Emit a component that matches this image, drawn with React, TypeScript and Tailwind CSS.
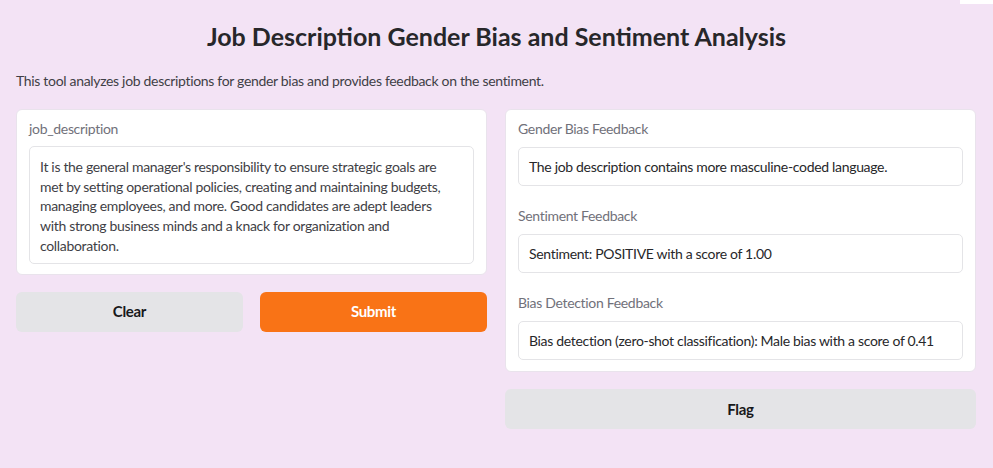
import React from 'react';

const FONT = { fontFamily: 'Lato, "Noto Sans", sans-serif' };

const JOB_LINES = [
  "It is the general manager's responsibility to ensure strategic goals are",
  'met by setting operational policies, creating and maintaining budgets,',
  'managing employees, and more. Good candidates are adept leaders',
  'with strong business minds and a knack for organization and',
  'collaboration.',
];

function OutputField({ label, value }: { label: string; value: string }) {
  return (
    <div className="flex flex-col">
      <div className="text-[14px] leading-[20px] text-[#71717a] h-[20px] mb-[8px]">{label}</div>
      <div className="h-[39px] border border-[#e4e4e7] rounded-[5px] px-[10px] flex items-center text-[14px] text-[#27272a] whitespace-nowrap">
        {value}
      </div>
    </div>
  );
}

export default function App() {
  return (
    <div className="relative w-[993px] h-[468px] bg-[#f3e3f5] text-[#27272a] overflow-hidden tracking-[-0.02em]" style={FONT}>
      {/* stray white corner at top right */}
      <div className="absolute top-0 right-0 w-[33px] h-[4px] bg-white" />

      <div className="px-[16px] pt-[20px]">
        <h1 className="text-center text-[25px] leading-[32px] font-bold tracking-normal text-[#27272a]">
          Job Description Gender Bias and Sentiment Analysis
        </h1>
        <p className="mt-[19px] text-[14px] leading-[20px] text-[#3f3f46]">
          This tool analyzes job descriptions for gender bias and provides feedback on the sentiment.
        </p>

        <div className="mt-[18px] flex gap-[18px] items-start">
          {/* left column */}
          <div className="w-[471px] flex flex-col gap-[17px]">
            <div className="bg-white border border-[#e9e3ec] rounded-[6px] px-[12px] pt-[9px] pb-[10px]">
              <div className="text-[14px] leading-[20px] h-[20px] text-[#71717a] mb-[7px]">job_description</div>
              <div className="border border-[#e4e4e7] rounded-[5px] px-[10px] pt-[10px] pb-[7px] text-[14px] leading-[19.7px] text-[#3f3f46]">
                {JOB_LINES.map((l) => (
                  <div key={l} className="whitespace-nowrap">{l}</div>
                ))}
              </div>
            </div>
            <div className="flex gap-[17px]">
              <button className="flex-1 h-[40px] rounded-[6px] bg-[#e4e4e7] text-[15px] font-bold text-[#18181b]">
                Clear
              </button>
              <button className="flex-1 h-[40px] rounded-[6px] bg-[#f97316] text-[15px] font-bold text-white">
                Submit
              </button>
            </div>
          </div>

          {/* right column */}
          <div className="w-[471px] flex flex-col gap-[17px]">
            <div className="bg-white border border-[#e9e3ec] rounded-[6px] px-[12px] pt-[9px] pb-[11px] flex flex-col gap-[20px]">
              <OutputField label="Gender Bias Feedback" value="The job description contains more masculine-coded language." />
              <OutputField label="Sentiment Feedback" value="Sentiment: POSITIVE with a score of 1.00" />
              <OutputField
                label="Bias Detection Feedback"
                value="Bias detection (zero-shot classification): Male bias with a score of 0.41"
              />
            </div>
            <button className="h-[40px] rounded-[6px] bg-[#e4e4e7] text-[15px] font-bold text-[#18181b]">Flag</button>
          </div>
        </div>
      </div>
    </div>
  );
}
